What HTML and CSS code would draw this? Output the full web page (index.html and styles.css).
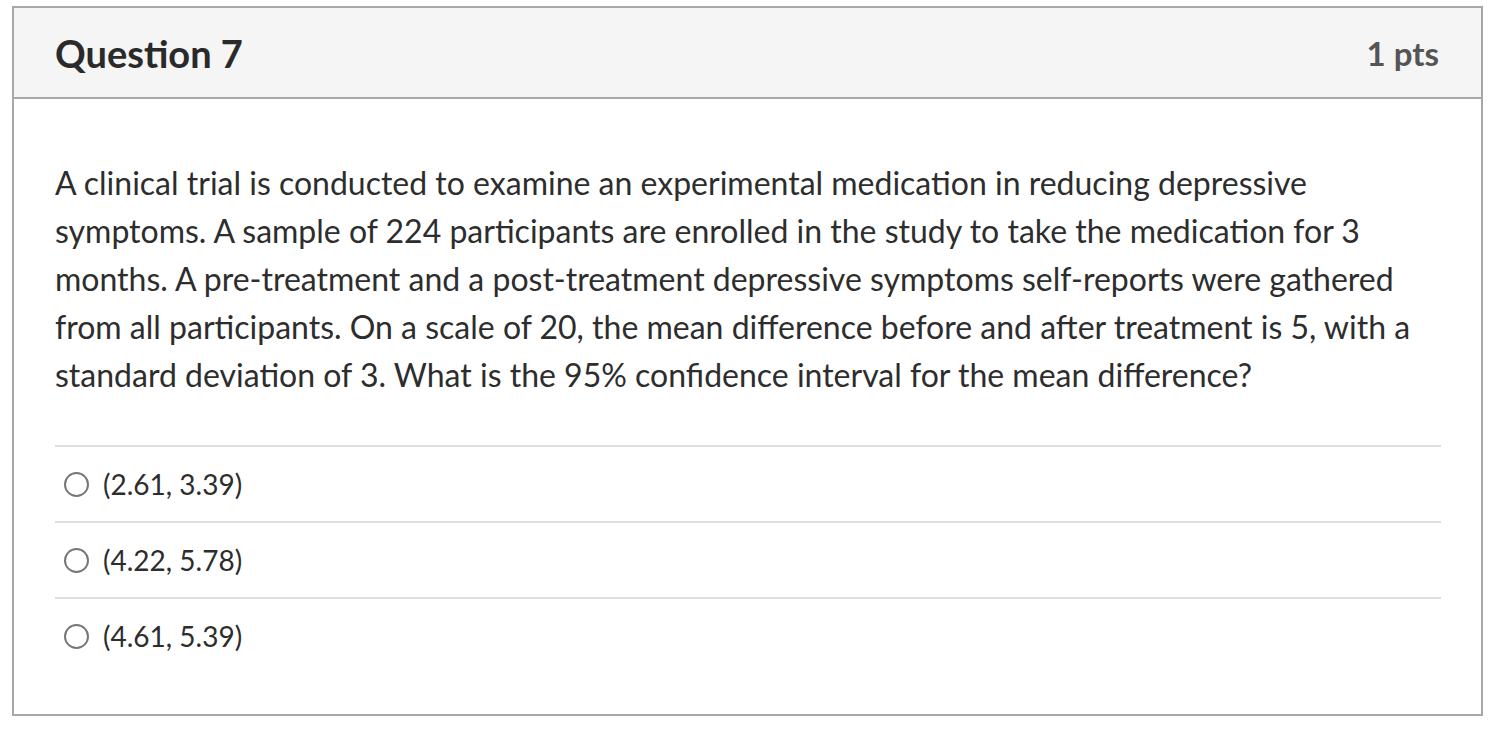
FILE: index.html
```html
<!DOCTYPE html>
<html>
<head>
<meta charset="utf-8">
<link rel="stylesheet" href="styles.css">
</head>
<body>
<div class="question">
  <div class="q-header">
    <h2 class="q-title">Question 7</h2>
    <span class="q-points">1 pts</span>
  </div>
  <div class="q-body">
    <p class="q-text">A clinical trial is conducted to examine an experimental medication in reducing depressive symptoms. A sample of 224 participants are enrolled in the study to take the medication for 3 months. A pre-treatment and a post-treatment depressive symptoms self-reports were gathered from all participants. On a scale of 20, the mean difference before and after treatment is 5, with a standard deviation of 3. What is the 95% confidence interval for the mean difference?</p>
    <div class="answers">
      <label class="answer"><span class="radio"></span><span class="answer-text">(2.61, 3.39)</span></label>
      <label class="answer"><span class="radio"></span><span class="answer-text">(4.22, 5.78)</span></label>
      <label class="answer"><span class="radio"></span><span class="answer-text">(4.61, 5.39)</span></label>
    </div>
  </div>
</div>
</body>
</html>
```
FILE: styles.css
```css
html, body {
  margin: 0;
  padding: 0;
  background: #ffffff;
}
body {
  font-family: Lato, "Open Sans", sans-serif;
  color: #2d2d2d;
}
.question {
  margin: 6px 5px 0 12px;
  border: 2px solid #a8a8a8;
  box-sizing: border-box;
  height: 710px;
}
.q-header {
  display: flex;
  align-items: center;
  justify-content: space-between;
  background: #f5f5f5;
  border-bottom: 2px solid #a8a8a8;
  height: 91px;
  padding: 0 42px 0 41px;
  box-sizing: border-box;
}
.q-title {
  margin: 0;
  font-size: 38px;
  font-weight: 700;
  color: #2a2a2a;
}
.q-points {
  font-size: 33px;
  font-weight: 700;
  color: #555555;
}
.q-body {
  padding: 60px 40px 0 41px;
}
.q-text {
  margin: 0 0 46px 0;
  font-size: 32px;
  line-height: 48px;
}
.answers {
  display: flex;
  flex-direction: column;
}
.answer {
  display: flex;
  align-items: center;
  border-top: 2px solid #dddddd;
  height: 74px;
  padding-left: 9px;
}
.radio {
  width: 25px;
  height: 25px;
  border: 2px solid #777777;
  border-radius: 50%;
  box-sizing: border-box;
  margin-right: 14px;
}
.answer-text {
  font-size: 28px;
}
```
